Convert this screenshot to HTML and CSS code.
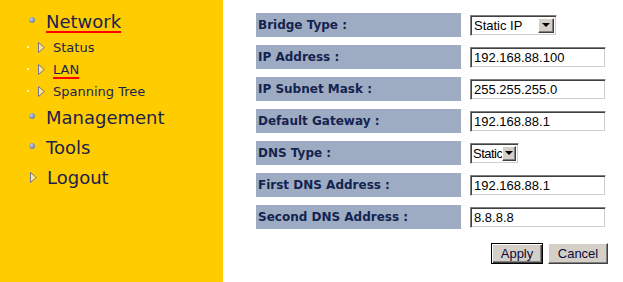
FILE: index.html
```html
<!DOCTYPE html>
<html lang="en">
<head>
<meta charset="UTF-8">
<meta name="viewport" content="width=device-width, initial-scale=1.0">
<title>LAN Settings</title>
<link rel="stylesheet" href="styles.css">
</head>
<body>
<div id="menu">
    <div class="item">
        <span class="ball"></span>
        <a class="current" href="#">Network</a>
    </div>
    <div class="sub">
        <span class="dot"></span>
        <svg class="tri" width="7" height="11" viewBox="0 0 7 11"><polygon points="0.5,0.5 6.3,5.5 0.5,10.5" /></svg>
        <a href="#">Status</a>
    </div>
    <div class="sub">
        <span class="dot"></span>
        <svg class="tri" width="7" height="11" viewBox="0 0 7 11"><polygon points="0.5,0.5 6.3,5.5 0.5,10.5" /></svg>
        <a class="current" href="#">LAN</a>
    </div>
    <div class="sub">
        <span class="dot"></span>
        <svg class="tri" width="7" height="11" viewBox="0 0 7 11"><polygon points="0.5,0.5 6.3,5.5 0.5,10.5" /></svg>
        <a href="#">Spanning Tree</a>
    </div>
    <div class="item">
        <span class="ball"></span>
        <a href="#">Management</a>
    </div>
    <div class="item">
        <span class="ball"></span>
        <a href="#">Tools</a>
    </div>
    <div class="item">
        <svg class="tri big" width="7" height="11" viewBox="0 0 7 11"><polygon points="0.5,0.5 6.3,5.5 0.5,10.5" /></svg>
        <a href="#">Logout</a>
    </div>
</div>

<div id="content">
    <form class="settings" onsubmit="return false">
        <div class="label">Bridge Type :</div>
        <div class="combo wide">
            <select><option>Static IP</option><option>DHCP</option></select>
            <span class="arrow"></span>
        </div>

        <div class="label">IP Address :</div>
        <input type="text" value="192.168.88.100">

        <div class="label">IP Subnet Mask :</div>
        <input type="text" value="255.255.255.0">

        <div class="label">Default Gateway :</div>
        <input type="text" value="192.168.88.1">

        <div class="label">DNS Type :</div>
        <div class="combo small">
            <select><option>Static</option><option>Auto</option></select>
            <span class="arrow"></span>
        </div>

        <div class="label">First DNS Address :</div>
        <input type="text" value="192.168.88.1">

        <div class="label">Second DNS Address :</div>
        <input type="text" value="8.8.8.8">

        <div class="buttons">
            <button class="default">Apply</button>
            <button>Cancel</button>
        </div>
    </form>
</div>
</body>
</html>
```

FILE: styles.css
```css
body {
    margin: 0;
    padding: 0;
    display: flex;
    height: 100vh;
    background-color: #fff;
    font-family: "DejaVu Sans", Verdana, sans-serif;
}
#menu {
    width: 223px;
    flex-shrink: 0;
    background-color: #ffcc00;
    padding-top: 6px;
    box-sizing: border-box;
}
#menu a {
    color: #1c1f4f;
    text-decoration: none;
}
#menu a.current {
    text-decoration: underline;
    text-decoration-color: #ff0000;
    text-decoration-thickness: 2px;
    text-underline-offset: 3px;
}
.item {
    display: flex;
    align-items: center;
    height: 30px;
    padding-left: 29px;
    font-size: 18px;
}
.item .ball {
    width: 6px;
    height: 6px;
    border-radius: 50%;
    margin: 0 11px 3px 0;
    background: radial-gradient(circle at 35% 35%, #c8d0e0 0, #8392ae 55%, #5d6b86 100%);
}
.item .tri.big {
    margin: 0 10px 0 1px;
}
.sub {
    display: flex;
    align-items: center;
    height: 22px;
    padding-left: 27px;
    font-size: 13px;
}
.sub .dot {
    width: 2px;
    height: 2px;
    background-color: #fff3c0;
    margin-right: 9px;
}
.sub .tri {
    margin-right: 8px;
}
.tri polygon {
    fill: #ffe680;
    stroke: #77749a;
    stroke-width: 1;
}

#content {
    padding: 13px 0 0 33px;
}
.settings {
    display: grid;
    grid-template-columns: 205px 136px;
    grid-auto-rows: 24px;
    column-gap: 9px;
    row-gap: 8px;
    margin: 0;
}
.label {
    background-color: #9eacc3;
    color: #14234f;
    font-weight: bold;
    font-size: 12px;
    line-height: 24px;
    padding-left: 2px;
}
input[type="text"], .combo {
    align-self: center;
    height: 21px;
    box-sizing: border-box;
    border: 1px solid;
    border-color: #808080 #ffffff #ffffff #808080;
    box-shadow: inset 1px 1px #404040, inset -1px -1px #d4d0c8;
    background-color: #fff;
    font-family: "Liberation Sans", Arial, sans-serif;
    font-size: 13px;
    color: #000;
}
input[type="text"] {
    width: 136px;
    padding: 0 3px;
    margin: 0;
    outline: none;
}
.combo {
    display: flex;
    width: 87px;
    padding: 2px;
}
.combo select {
    appearance: none;
    -webkit-appearance: none;
    flex: 1;
    min-width: 0;
    border: none;
    background: transparent;
    font: inherit;
    color: #000;
    padding: 0 0 0 1px;
    margin: 0;
    outline: none;
    text-overflow: clip;
}
.combo.small {
    width: 49px;
}
.combo.small select {
    letter-spacing: -0.5px;
    padding-left: 0;
}
.combo .arrow {
    width: 16px;
    flex-shrink: 0;
    box-sizing: border-box;
    background-color: #d4d0c8;
    border: 1px solid;
    border-color: #fff #404040 #404040 #fff;
    box-shadow: inset -1px -1px #808080;
    display: flex;
    align-items: center;
    justify-content: center;
}
.combo.small .arrow {
    width: 14px;
}
.combo .arrow::after {
    content: "";
    border-left: 4px solid transparent;
    border-right: 4px solid transparent;
    border-top: 4px solid #000;
    margin: 0 1px 1px 0;
}
.buttons {
    grid-column: 1 / 3;
    display: flex;
    justify-content: flex-end;
    gap: 5px;
    margin: 6px -2px 0 0;
}
button {
    height: 21px;
    box-sizing: border-box;
    padding: 0;
    background-color: #d4d0c8;
    border: 1px solid;
    border-color: #fff #404040 #404040 #fff;
    box-shadow: inset -1px -1px #808080;
    font-family: "Liberation Sans", Arial, sans-serif;
    font-size: 13px;
    color: #0a0a3a;
    width: 60px;
}
button.default {
    width: 52px;
    border: 1px solid #000;
    box-shadow: inset 1px 1px #fff, inset -1px -1px #404040, inset -2px -2px #808080;
}
```
